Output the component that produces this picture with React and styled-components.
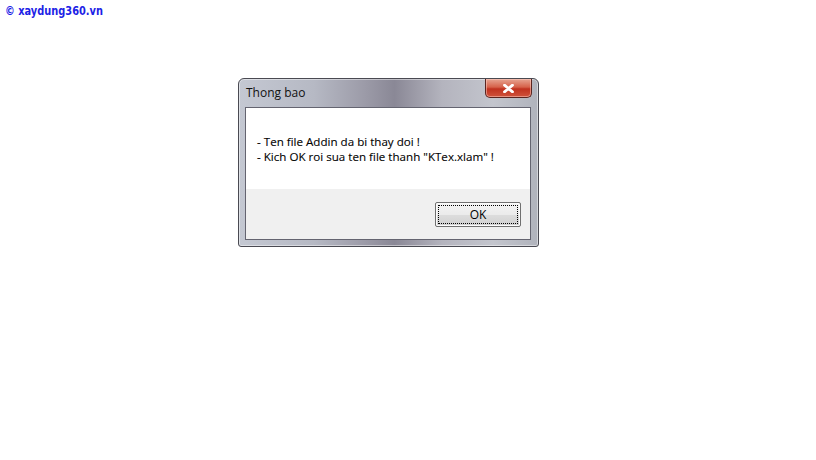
import React from "react";
import styled, { createGlobalStyle } from "styled-components";

const Global = createGlobalStyle`
  body {
    margin: 0;
    background: #fff;
  }
`;

const Page = styled.div`
  width: 816px;
  height: 460px;
  padding: 4px 0 0 5px;
  box-sizing: border-box;
`;

const Logo = styled.div`
  font-family: "Liberation Sans Narrow", "DejaVu Sans Condensed", "DejaVu Sans", sans-serif;
  font-weight: 700;
  font-size: 13px;
  line-height: 14px;
  color: #1c22e6;
  height: 14px;
  white-space: nowrap;
  transform: scaleX(0.84);
  transform-origin: left center;
`;

const Window = styled.div`
  margin: 60px 0 0 233px;
  width: 301px;
  height: 169px;
  box-sizing: border-box;
  border: 1px solid #4a4a52;
  border-radius: 6px 6px 3px 3px;
  background: linear-gradient(
    90deg,
    #c4c8d2 0%,
    #b6b9c4 25%,
    #9c9ba8 42%,
    #8a8896 52%,
    #b4b4be 68%,
    #c3c5cd 85%,
    #b0b3bc 100%
  );
  display: flex;
  flex-direction: column;
  padding: 0 7px 6px 6px;
  box-shadow: inset 0 0 0 1px rgba(255, 255, 255, 0.45);
`;

const TitleBar = styled.div`
  height: 28px;
  display: flex;
  align-items: flex-start;
  justify-content: space-between;
`;

const Title = styled.div`
  font-family: "Open Sans", "Noto Sans", sans-serif;
  font-size: 12px;
  color: #111;
  padding: 6px 0 0 1px;
  line-height: 16px;
`;

const Close = styled.div`
  width: 47px;
  height: 19px;
  box-sizing: border-box;
  margin-right: -1px;
  border: 1px solid #5a2520;
  border-top: none;
  border-radius: 0 0 5px 5px;
  background: linear-gradient(180deg, #e7a592 0%, #d6624a 45%, #c0321f 55%, #d0533c 100%);
  display: flex;
  align-items: center;
  justify-content: center;
  box-shadow: inset 0 0 0 1px rgba(255, 210, 200, 0.5);
`;

const Client = styled.div`
  flex: 1;
  border: 1px solid #646470;
  display: flex;
  flex-direction: column;
  background: #f0f0f0;
`;

const Message = styled.div`
  height: 81px;
  background: #fff;
  box-sizing: border-box;
  padding: 26px 0 0 11px;
  font-family: "Open Sans", "Noto Sans", sans-serif;
  font-size: 11.6px;
  line-height: 15px;
  color: #000;
  -webkit-text-stroke: 0.1px #000;
`;

const Footer = styled.div`
  flex: 1;
  display: flex;
  justify-content: flex-end;
  align-items: flex-start;
  padding: 13px 9px 0 0;
`;

const Button = styled.button`
  width: 86px;
  height: 25px;
  box-sizing: border-box;
  border: 1px solid #707070;
  border-radius: 2px;
  background: linear-gradient(180deg, #f4f4f4 0%, #ebebeb 50%, #dddddd 51%, #d0d0d0 100%);
  padding: 2px;
  font-family: "Open Sans", "Noto Sans", sans-serif;
  font-size: 12px;
  color: #000;
  box-shadow: inset 0 0 0 1px #fbfbfb;
`;

const Focus = styled.span`
  display: flex;
  align-items: center;
  justify-content: center;
  height: 100%;
  border: 1px dotted #000;
  box-sizing: border-box;
`;

export default function App() {
  return (
    <Page>
      <Global />
      <Logo>© xaydung360.vn</Logo>
      <Window>
        <TitleBar>
          <Title>Thong bao</Title>
          <Close>
            <svg width="11" height="9" viewBox="0 0 11 9">
              <path
                d="M1.5 1.2 L9.5 7.8 M9.5 1.2 L1.5 7.8"
                stroke="#fff"
                strokeWidth="2.8"
                strokeLinecap="round"
              />
            </svg>
          </Close>
        </TitleBar>
        <Client>
          <Message>
            - Ten file Addin da bi thay doi !
            <br />
            - Kich OK roi sua ten file thanh "KTex.xlam" !
          </Message>
          <Footer>
            <Button>
              <Focus>OK</Focus>
            </Button>
          </Footer>
        </Client>
      </Window>
    </Page>
  );
}
